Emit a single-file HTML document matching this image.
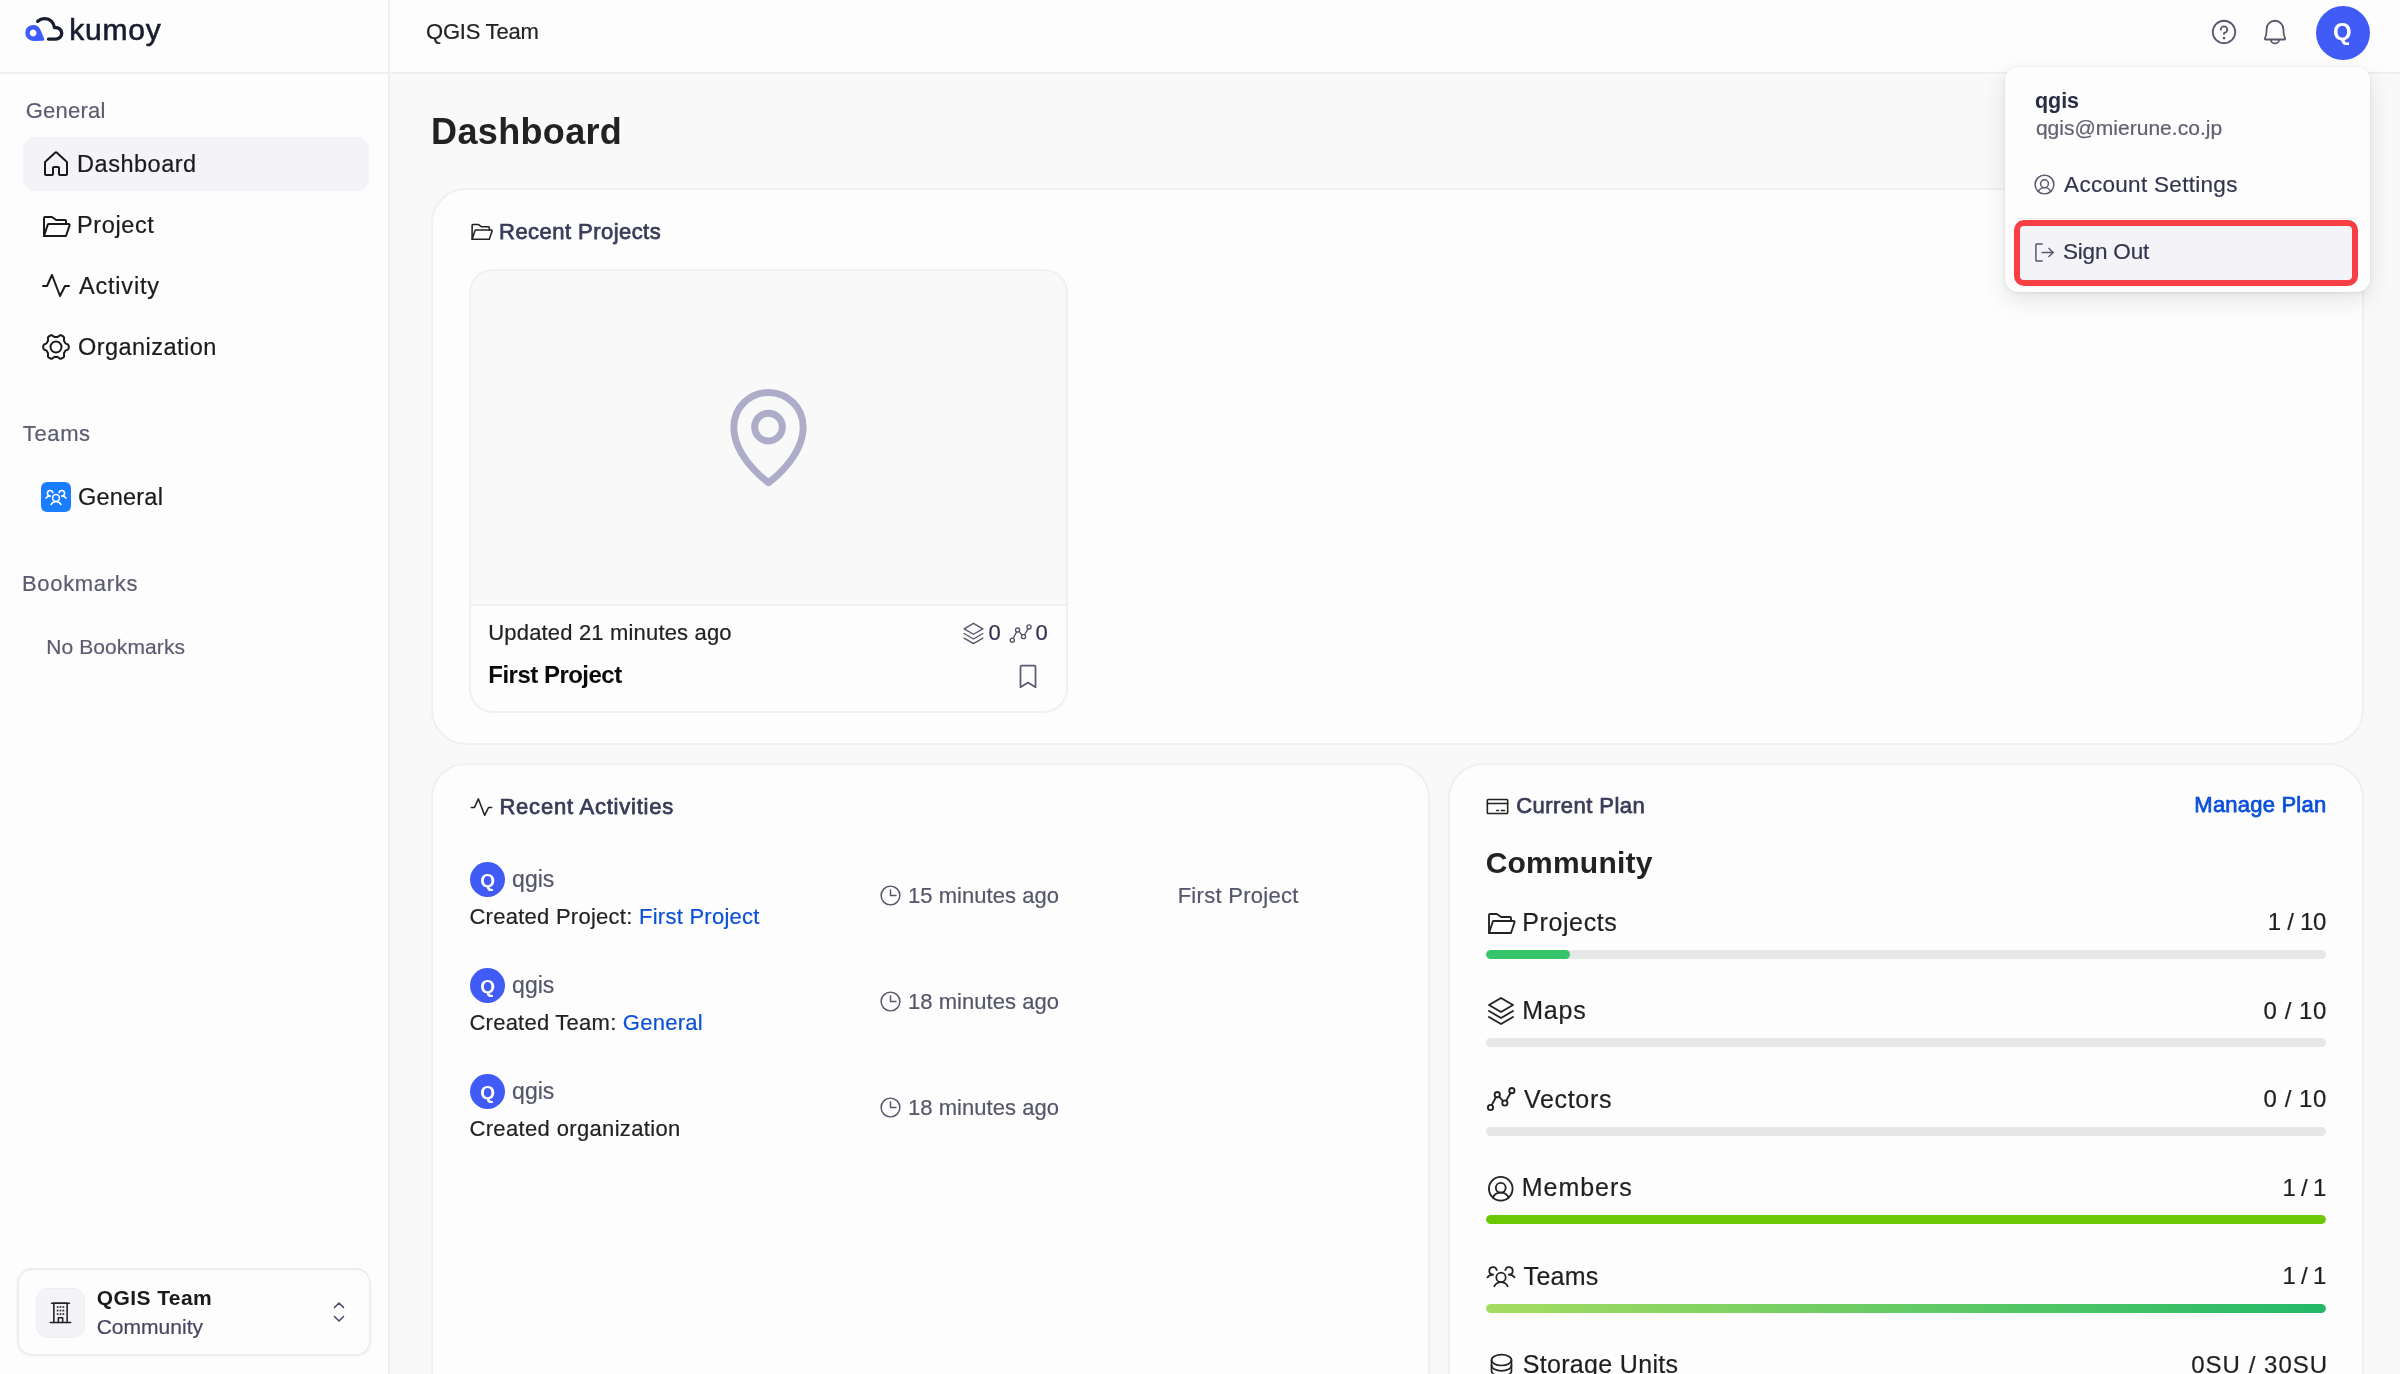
<!DOCTYPE html>
<html lang="en">
<head>
<meta charset="utf-8">
<title>Dashboard - kumoy</title>
<style>
*{box-sizing:border-box;margin:0;padding:0}
html,body{width:2400px;height:1374px;overflow:hidden}
body{position:relative;background:#f9f9f9;will-change:transform;font-family:"Liberation Sans",sans-serif;color:#1c1c1c}
.abs,.t,svg.i{position:absolute}
.t{white-space:nowrap;line-height:1;left:0;top:0;font-weight:normal;-webkit-text-stroke:.2px currentColor}
.t.b{-webkit-text-stroke:0}
svg.i{fill:none;stroke:currentColor;stroke-linecap:round;stroke-linejoin:round;overflow:visible}
a{color:#0b50d8;text-decoration:none}
b,.b{font-weight:bold}
/* sidebar */
#sidebar{position:absolute;left:0;top:0;width:390px;height:1374px;background:#fdfdfd;border-right:2px solid #efeff0}
#logo{position:absolute;left:0;top:0;width:388px;height:74px;border-bottom:2px solid #efeff0}
.lbl{color:#5b5c70;font-size:21px}
.nav{font-size:23px;color:#1a1a1a}
#active{position:absolute;left:23px;top:137px;width:346px;height:54px;border-radius:13px;background:#f3f3f8}
#teamic{position:absolute;left:41px;top:482px;width:30px;height:30px;border-radius:6px;background:#1a7dff;color:#fff}
#orgcard{position:absolute;left:16.5px;top:1268px;width:354px;height:88px;border:2px solid #eeeef1;border-radius:15px;background:#fdfdfd;box-shadow:0 1px 3px rgba(0,0,0,.04)}
#orgic{position:absolute;left:17px;top:18px;width:49.5px;height:49.5px;border-radius:12px;background:#f3f3f8;border:1px solid #ededf2;color:#222}
/* header */
#header{position:absolute;left:390px;top:0;width:2010px;height:74px;background:#fdfdfd;border-bottom:2px solid #efeff0}
#avatar{position:absolute;left:1925.7px;top:5.6px;width:54px;height:54px;border-radius:50%;background:#405bf6;color:#fff}
/* main */
.card{position:absolute;background:#fdfdfd;border:2px solid #f0f0f1;border-radius:35px}
.ctitle{color:#3a3c58}
#pcard{position:absolute;left:469px;top:268.5px;width:598.5px;height:444.5px;border:2px solid #f0f0f1;border-radius:24px;background:#fdfdfd;overflow:hidden}
#pimg{position:absolute;left:0;top:0;width:595px;height:335.5px;background:#f9f9f9;border-bottom:2px solid #f0f0f1}
.av{position:absolute;width:35px;height:35px;border-radius:50%;background:#405bf6;color:#fff}
.mut{color:#55566a}
.bar{position:absolute;left:1486px;width:840px;height:9px;border-radius:5px;background:#e7e7e7;overflow:hidden}
.bar i{position:absolute;left:0;top:0;height:9px;border-radius:5px;display:block}
.row{font-size:25px;color:#1f1f1f}
/* menu */
#menu{position:absolute;left:2005px;top:67px;width:365px;height:225px;border-radius:13px;background:#fdfdfd;box-shadow:0 0 0 1px rgba(0,0,0,.03),0 8px 24px rgba(0,0,0,.10),0 2px 6px rgba(0,0,0,.05)}
#signout{position:absolute;left:9px;top:153px;width:344px;height:66px;border:6px solid #f83f43;border-radius:10px;background:#f3f3f8}
#mdiv{position:absolute;left:12px;top:151px;width:340px;height:1px;background:#e9e9ee}
</style>
</head>
<body>

<div id="sidebar">
  <div id="logo">
    <svg class="abs" style="left:20px;top:12px" width="50" height="34" viewBox="20 12 50 34">
      <path fill="#3d5cff" fill-rule="evenodd" d="M25.300 33A7.900 7.900 0 0 1 40.300 29.500L44.100 38.600Q44.900 40.700 42.700 40.800L33.200 40.900A7.900 7.900 0 0 1 25.300 33ZM33.100 29.600a3.400 3.400 0 1 0 .01 0Z"/>
      <path fill="none" stroke="#171c2e" stroke-width="3.4" stroke-linecap="round" stroke-linejoin="round" d="M37.700 21.300C40 19.200 42.500 18.500 44.800 18.600C50.200 18.800 53.600 22.500 54.400 27.500C58.500 27.200 61.700 29.600 61.700 33.300C61.700 36.600 59 39.100 55.500 39.100L48.500 39.100"/>
    </svg>
    <span class="t" id="brand" style="left:69.36px;top:15.31px;font-size:30px;color:#171c2e;letter-spacing:0.765px;-webkit-text-stroke:.6px #171c2e;">kumoy</span>
  </div>
  <span class="t lbl" id="l-general" style="left:25.64px;top:99.5px;font-size:22px;letter-spacing:0.27px;">General</span>
  <div id="active"></div>
  <svg class="i" viewBox="0 0 256 256" stroke-width="16" style="left:40px;top:148px;width:32px;height:32px;color:#1a1a1a;"><path d="M152 208V160a8 8 0 0 0-8-8H112a8 8 0 0 0-8 8v48a8 8 0 0 1-8 8H48a8 8 0 0 1-8-8V115.5a8.3 8.3 0 0 1 2.6-5.9l80-72.7a8 8 0 0 1 10.8 0l80 72.7a8.3 8.3 0 0 1 2.6 5.9V208a8 8 0 0 1-8 8H160a8 8 0 0 1-8-8Z"/></svg>
  <span class="t nav" id="n-dash" style="left:77.1px;top:153.3px;font-size:23.5px;letter-spacing:0.517px;">Dashboard</span>
  <svg class="i" viewBox="0 0 256 256" stroke-width="16" style="left:40px;top:210px;width:32px;height:32px;color:#1a1a1a;"><path d="M32 208V64a8 8 0 0 1 8-8H93.3a8.1 8.1 0 0 1 4.8 1.6l27.8 20.8a8.1 8.1 0 0 0 4.8 1.6H200a8 8 0 0 1 8 8v24"/><path d="M32 208l30.2-90.5a8 8 0 0 1 7.6-5.5H228.9a8 8 0 0 1 7.6 10.500L208 208Z"/></svg>
  <span class="t nav" id="n-proj" style="left:77.1px;top:214.0px;font-size:23.5px;letter-spacing:0.6px;">Project</span>
  <svg class="i" viewBox="0 0 256 256" stroke-width="16" style="left:40px;top:270px;width:32px;height:32px;color:#1a1a1a;"><polyline points="24,128 56,128 96,40 160,208 200,128 232,128"/></svg>
  <span class="t nav" id="n-act" style="left:78.9px;top:275.0px;font-size:23.5px;letter-spacing:0.825px;">Activity</span>
  <svg class="i" viewBox="0 0 256 256" stroke-width="16" style="left:40px;top:331px;width:32px;height:32px;color:#1a1a1a;"><circle cx="128" cy="128" r="44"/><path d="M230 128L230 135L228 141L225 147L216 152L207 155L203 159L200 163L197 168L195 173L192 177L191 183L192 192L193 202L190 208L185 213L179 216L173 219L167 222L160 222L152 216L144 210L139 208L133 208L128 208L123 208L117 208L112 210L104 216L96 222L89 222L83 219L77 216L71 213L66 208L63 202L64 192L65 183L64 177L61 173L59 168L56 163L53 159L49 155L40 152L31 147L28 141L26 135L26 128L26 121L28 115L31 109L40 104L49 101L53 97L56 93L59 88L61 83L64 79L65 73L64 64L63 54L66 48L71 43L77 40L83 37L89 34L96 34L104 40L112 46L117 48L123 48L128 48L133 48L139 48L144 46L152 40L160 34L167 34L173 37L179 40L185 43L190 48L193 54L192 64L191 73L192 79L195 83L197 88L200 93L203 97L207 101L216 104L225 109L228 115L230 121Z"/></svg>
  <span class="t nav" id="n-org" style="left:78.0px;top:336.3px;font-size:23.5px;letter-spacing:0.455px;">Organization</span>
  <span class="t lbl" id="l-teams" style="left:22.82px;top:423.21px;font-size:22px;letter-spacing:0.622px;">Teams</span>
  <div id="teamic"><svg class="i" viewBox="0 0 256 256" stroke-width="18" style="left:4px;top:4px;width:22px;height:22px;color:#fff;"><circle cx="128" cy="140" r="40"/><path d="M196 116a59.8 59.8 0 0 1 48 24"/><path d="M12 140a59.8 59.8 0 0 1 48-24"/><path d="M70.4 216a64.100 64.100 0 0 1 115.2 0"/><path d="M60 116A32 32 0 1 1 91.4 78"/><path d="M164.6 78A32 32 0 1 1 196 116"/></svg></div>
  <span class="t nav" id="n-gen" style="left:78.0px;top:485.6px;font-size:23.5px;letter-spacing:0.21px;">General</span>
  <span class="t lbl" id="l-book" style="left:21.92px;top:573.21px;font-size:22px;letter-spacing:0.696px;">Bookmarks</span>
  <span class="t" id="nobook" style="left:46.28px;top:636.3px;font-size:21px;color:#5b5c70;letter-spacing:0.094px;">No Bookmarks</span>
  <div id="orgcard">
    <div id="orgic"><svg class="i" viewBox="0 0 256 256" stroke-width="16" style="left:11.2px;top:11px;width:25px;height:25px;color:#222;"><line x1="24" y1="231" x2="232" y2="231"/><path d="M60 231V34h136v197"/><line x1="37" y1="34" x2="219" y2="34"/><path d="M106 231v-50h44v50"/><g stroke-width="17" stroke-linecap="butt"><line x1="90" y1="72" x2="107" y2="72"/><line x1="119.500" y1="72" x2="136.500" y2="72"/><line x1="149" y1="72" x2="166" y2="72"/><line x1="90" y1="108" x2="107" y2="108"/><line x1="119.500" y1="108" x2="136.500" y2="108"/><line x1="149" y1="108" x2="166" y2="108"/><line x1="90" y1="144" x2="107" y2="144"/><line x1="119.500" y1="144" x2="136.500" y2="144"/><line x1="149" y1="144" x2="166" y2="144"/></g></svg></div>
    <span class="t b" id="o-name" style="left:78.2px;top:17.0px;font-size:21px;color:#1a1a1a;letter-spacing:0.428px;">QGIS Team</span>
    <span class="t" id="o-plan" style="left:78.2px;top:46.21px;font-size:21px;color:#45465f;letter-spacing:0.018px;">Community</span>
    <svg class="i" viewBox="0 0 256 256" stroke-width="16" style="left:308.35px;top:30.25px;width:24px;height:24px;color:#45465f;"><polyline points="80 176 128 224 176 176"/><polyline points="80 80 128 32 176 80"/></svg>
  </div>
</div>

<div id="header">
  <span class="t" id="h-team" style="left:36.0px;top:21.31px;font-size:22px;color:#222;letter-spacing:-0.225px;">QGIS Team</span>
  <svg class="i" viewBox="0 0 256 256" stroke-width="15" style="left:1818.6999999999998px;top:17.3px;width:30px;height:30px;color:#55566a;"><circle cx="128" cy="128" r="96"/><circle cx="128" cy="180" r="11" fill="currentColor" stroke="none"/><path d="M128 144v-8a28 28 0 1 0-28-28"/></svg>
  <svg class="i" viewBox="0 0 256 256" stroke-width="15" style="left:1870.3000000000002px;top:17px;width:30px;height:30px;color:#55566a;"><path d="M56.2 104a71.900 71.900 0 0 1 72.300-72c39.6.3 71.3 33.2 71.3 72.900V112c0 35.8 7.5 56.6 14.100 68a8 8 0 0 1-6.900 12H49a8 8 0 0 1-6.900-12c6.600-11.400 14.100-32.200 14.100-68Z"/><path d="M94 196a34 30 0 0 0 68 0"/></svg>
  <div id="avatar"><span class="t b" id="av-q" style="left:17.3px;top:14.71px;font-size:24px;color:#fff;letter-spacing:0px;">Q</span></div>
</div>

<div id="main">
  <h1 class="t b" id="h1" style="left:431.1px;top:113.51px;font-size:36px;color:#222;letter-spacing:0.337px;">Dashboard</h1>
  <div class="card" id="c1" style="left:431.2px;top:188px;width:1933px;height:557.3px"></div>
  <svg class="i" viewBox="0 0 256 256" stroke-width="16" style="left:468.7px;top:219.3px;width:25px;height:25px;color:#222;"><path d="M32 208V64a8 8 0 0 1 8-8H93.3a8.1 8.1 0 0 1 4.8 1.6l27.8 20.8a8.1 8.1 0 0 0 4.8 1.6H200a8 8 0 0 1 8 8v24"/><path d="M32 208l30.2-90.5a8 8 0 0 1 7.6-5.5H228.9a8 8 0 0 1 7.6 10.500L208 208Z"/></svg>
  <span class="t ctitle" id="c1-t" style="left:499.1px;top:221.31px;font-size:22px;letter-spacing:0.45px;-webkit-text-stroke:.75px currentColor;">Recent Projects</span>
  <div id="pcard">
    <div id="pimg"><svg class="i" viewBox="0 0 256 256" stroke-width="16" style="left:242px;top:111.3px;width:111px;height:111px;color:#aeadc9;"><circle cx="128" cy="104" r="32"/><path d="M208 104c0 72-80 128-80 128S48 176 48 104a80 80 0 0 1 160 0Z"/></svg></div>
    <span class="t" id="p-upd" style="left:17.28px;top:351.5px;font-size:22px;color:#222;letter-spacing:0.171px;">Updated 21 minutes ago</span>
    <svg class="i" viewBox="0 0 256 256" stroke-width="14" style="left:489.6px;top:350.20000000000005px;width:25px;height:25px;color:#55566a;"><polyline points="32 176 128 232 224 176"/><polyline points="32 128 128 184 224 128"/><polygon points="32 80 128 136 224 80 128 24 32 80"/></svg>
    <span class="t" id="p-n1" style="left:517.5px;top:351.81px;font-size:22px;color:#2f3150;letter-spacing:0px;">0</span>
    <svg class="i" viewBox="0 0 256 256" stroke-width="14" style="left:537px;top:350.0px;width:25px;height:25px;color:#55566a;"><circle cx="44" cy="196" r="21"/><circle cx="98" cy="93" r="21"/><circle cx="159" cy="160" r="21"/><circle cx="215" cy="61" r="21"/><line x1="54" y1="177" x2="88" y2="112"/><line x1="113" y1="109" x2="144" y2="144"/><line x1="169" y1="141" x2="205" y2="80"/></svg>
    <span class="t" id="p-n2" style="left:564.5px;top:351.81px;font-size:22px;color:#2f3150;letter-spacing:0px;">0</span>
    <span class="t b" id="p-name" style="left:17.28px;top:392.71px;font-size:24px;color:#0a0a0a;letter-spacing:-0.51px;">First Project</span>
    <svg class="i" viewBox="0 0 256 256" stroke-width="15" style="left:541.7px;top:390.25px;width:30px;height:30px;color:#5a5b70;"><path d="M192 224l-64-40L64 224V48a8 8 0 0 1 8-8H184a8 8 0 0 1 8 8Z"/></svg>
  </div>

  <div class="card" id="c2" style="left:431.2px;top:763px;width:998.5px;height:700px"></div>
  <svg class="i" viewBox="0 0 256 256" stroke-width="16" style="left:468.8px;top:794.9px;width:25px;height:25px;color:#222;"><polyline points="24,128 56,128 96,40 160,208 200,128 232,128"/></svg>
  <span class="t ctitle" id="c2-t" style="left:499.46px;top:795.5px;font-size:22px;letter-spacing:0.771px;-webkit-text-stroke:.75px currentColor;">Recent Activities</span>
  <div class="av" style="left:470px;top:862.4px"><span class="t b" id="a1-q" style="left:10.2px;top:8.32px;font-size:19px;color:#fff;letter-spacing:0px;">Q</span></div><span class="t mut" id="a1-who" style="left:512.1px;top:867.71px;font-size:23px;letter-spacing:0.0px;">qgis</span><span class="t" id="a1-what" style="left:469.46px;top:906.4px;font-size:22px;color:#222;letter-spacing:0.262px;">Created Project: <a>First Project</a></span><svg class="i" viewBox="0 0 256 256" stroke-width="15" style="left:877.5px;top:883.3px;width:25px;height:25px;color:#55566a;"><circle cx="128" cy="128" r="96"/><polyline points="128 72 128 128 184 128"/></svg><span class="t mut" id="a1-when" style="left:908.0px;top:885.0px;font-size:22px;letter-spacing:0.042px;">15 minutes ago</span><span class="t mut" id="a1-third" style="left:1177.64px;top:885.0px;font-size:22px;letter-spacing:0.285px;">First Project</span>
  <div class="av" style="left:470px;top:968.4px"><span class="t b" id="a2-q" style="left:10.2px;top:8.32px;font-size:19px;color:#fff;letter-spacing:0px;">Q</span></div><span class="t mut" id="a2-who" style="left:512.1px;top:973.71px;font-size:23px;letter-spacing:0.0px;">qgis</span><span class="t" id="a2-what" style="left:469.46px;top:1012.4px;font-size:22px;color:#222;letter-spacing:0.242px;">Created Team: <a>General</a></span><svg class="i" viewBox="0 0 256 256" stroke-width="15" style="left:877.5px;top:989.3px;width:25px;height:25px;color:#55566a;"><circle cx="128" cy="128" r="96"/><polyline points="128 72 128 128 184 128"/></svg><span class="t mut" id="a2-when" style="left:908.0px;top:991.0px;font-size:22px;letter-spacing:0.042px;">18 minutes ago</span>
  <div class="av" style="left:470px;top:1074.4px"><span class="t b" id="a3-q" style="left:10.2px;top:8.32px;font-size:19px;color:#fff;letter-spacing:0px;">Q</span></div><span class="t mut" id="a3-who" style="left:512.1px;top:1079.71px;font-size:23px;letter-spacing:0.0px;">qgis</span><span class="t" id="a3-what" style="left:469.46px;top:1118.4px;font-size:22px;color:#222;letter-spacing:0.349px;">Created organization</span><svg class="i" viewBox="0 0 256 256" stroke-width="15" style="left:877.5px;top:1095.3000000000002px;width:25px;height:25px;color:#55566a;"><circle cx="128" cy="128" r="96"/><polyline points="128 72 128 128 184 128"/></svg><span class="t mut" id="a3-when" style="left:908.0px;top:1097.0px;font-size:22px;letter-spacing:0.042px;">18 minutes ago</span>

  <div class="card" id="c3" style="left:1448px;top:763px;width:916.2px;height:700px"></div>
  <svg class="i" viewBox="0 0 256 256" stroke-width="16" style="left:1485.4px;top:794.3px;width:25px;height:25px;color:#222;"><rect x="24" y="56" width="208" height="144" rx="8"/><line x1="168" y1="168" x2="200" y2="168"/><line x1="120" y1="168" x2="136" y2="168"/><line x1="24" y1="97" x2="232" y2="97"/></svg>
  <span class="t ctitle" id="c3-t" style="left:1516.18px;top:795.31px;font-size:22px;letter-spacing:0.455px;-webkit-text-stroke:.75px currentColor;">Current Plan</span>
  <a class="t" id="c3-m" style="left:auto;right:73.64px;top:794px;font-size:22px;letter-spacing:0.216px;-webkit-text-stroke:.75px currentColor;">Manage Plan</a>
  <span class="t b" id="c3-plan" style="left:1485.64px;top:848.0px;font-size:30px;color:#222;letter-spacing:0.225px;">Community</span>
  <svg class="i" viewBox="0 0 256 256" stroke-width="15" style="left:1485.0px;top:907.0px;width:32px;height:32px;color:#222;"><path d="M32 208V64a8 8 0 0 1 8-8H93.3a8.1 8.1 0 0 1 4.8 1.6l27.8 20.8a8.1 8.1 0 0 0 4.8 1.6H200a8 8 0 0 1 8 8v24"/><path d="M32 208l30.2-90.5a8 8 0 0 1 7.6-5.5H228.9a8 8 0 0 1 7.6 10.500L208 208Z"/></svg><span class="t row" id="p1-l" style="left:1522.18px;top:909.51px;font-size:25px;letter-spacing:0.622px;">Projects</span><span class="t row" id="p1-v" style="left:auto;right:74.04px;top:910px;font-size:24px;letter-spacing:-0.306px">1 / 10</span><div class="bar" style="top:950px"><i style="width:84px;background:#35c46a"></i></div>
  <svg class="i" viewBox="0 0 256 256" stroke-width="15" style="left:1485.0px;top:994.8px;width:32px;height:32px;color:#222;"><polyline points="32 176 128 232 224 176"/><polyline points="32 128 128 184 224 128"/><polygon points="32 80 128 136 224 80 128 24 32 80"/></svg><span class="t row" id="p2-l" style="left:1522.18px;top:998.31px;font-size:25px;letter-spacing:0.84px;">Maps</span><span class="t row" id="p2-v" style="left:auto;right:73.14px;top:999px;font-size:24px;letter-spacing:0.54px">0 / 10</span><div class="bar" style="top:1038px"></div>
  <svg class="i" viewBox="0 0 256 256" stroke-width="15" style="left:1485.0px;top:1083.2px;width:32px;height:32px;color:#222;"><circle cx="44" cy="196" r="21"/><circle cx="98" cy="93" r="21"/><circle cx="159" cy="160" r="21"/><circle cx="215" cy="61" r="21"/><line x1="54" y1="177" x2="88" y2="112"/><line x1="113" y1="109" x2="144" y2="144"/><line x1="169" y1="141" x2="205" y2="80"/></svg><span class="t row" id="p3-l" style="left:1523.98px;top:1086.71px;font-size:25px;letter-spacing:0.69px;">Vectors</span><span class="t row" id="p3-v" style="left:auto;right:73.14px;top:1087px;font-size:24px;letter-spacing:0.54px">0 / 10</span><div class="bar" style="top:1127px"></div>
  <svg class="i" viewBox="0 0 256 256" stroke-width="15" style="left:1485.25px;top:1172.75px;width:31.5px;height:31.5px;color:#222;"><circle cx="128" cy="128" r="96"/><circle cx="128" cy="120" r="40"/><path d="M63.8 199.4a72 72 0 0 1 128.4 0"/></svg><span class="t row" id="p4-l" style="left:1521.82px;top:1175.01px;font-size:25px;letter-spacing:0.96px;">Members</span><span class="t row" id="p4-v" style="left:auto;right:74.49px;top:1176px;font-size:24px;letter-spacing:-0.72px">1 / 1</span><div class="bar" style="top:1215px"><i style="width:840px;background:#6cc704"></i></div>
  <svg class="i" viewBox="0 0 256 256" stroke-width="15" style="left:1486.0px;top:1260.8px;width:30px;height:30px;color:#222;"><circle cx="128" cy="140" r="40"/><path d="M196 116a59.8 59.8 0 0 1 48 24"/><path d="M12 140a59.8 59.8 0 0 1 48-24"/><path d="M70.4 216a64.100 64.100 0 0 1 115.2 0"/><path d="M60 116A32 32 0 1 1 91.4 78"/><path d="M164.6 78A32 32 0 1 1 196 116"/></svg><span class="t row" id="p5-l" style="left:1523.62px;top:1263.81px;font-size:25px;letter-spacing:0.278px;">Teams</span><span class="t row" id="p5-v" style="left:auto;right:74.49px;top:1264px;font-size:24px;letter-spacing:-0.72px">1 / 1</span><div class="bar" style="top:1304px"><i style="width:840px;background:linear-gradient(90deg,#a5dc60,#23b968)"></i></div>
  <svg class="i" viewBox="0 0 256 256" stroke-width="15" style="left:1486.5px;top:1350.8px;width:29px;height:29px;color:#222;"><ellipse cx="128" cy="80" rx="88" ry="48"/><path d="M40 80v48c0 26.500 39.400 48 88 48s88-21.500 88-48V80"/><path d="M40 128v48c0 26.500 39.400 48 88 48s88-21.500 88-48V128"/></svg><span class="t row" id="p6-l" style="left:1522.72px;top:1352.31px;font-size:25px;letter-spacing:0.323px;">Storage Units</span><span class="t row" id="p6-v" style="left:auto;right:71.79px;top:1353px;font-size:24px;letter-spacing:1.03px">0SU / 30SU</span><div class="bar" style="top:1392px"></div>
</div>

<div id="menu">
  <span class="t b" id="m-name" style="left:30.0px;top:24.31px;font-size:21.5px;color:#2a2b45;letter-spacing:-0.06px;">qgis</span>
  <span class="t" id="m-mail" style="left:30.9px;top:50.1px;font-size:21px;color:#60616f;letter-spacing:0.018px;">qgis@mierune.co.jp</span>
  <svg class="i" viewBox="0 0 256 256" stroke-width="15" style="left:26.700000000000045px;top:105.1px;width:25px;height:25px;color:#55566a;"><circle cx="128" cy="128" r="96"/><circle cx="128" cy="120" r="40"/><path d="M63.8 199.4a72 72 0 0 1 128.4 0"/></svg>
  <span class="t" id="m-acc" style="left:59.08px;top:106.51px;font-size:22.5px;color:#33354e;letter-spacing:0.3px;">Account Settings</span>
  <div id="mdiv"></div>
  <div id="signout">
    <svg class="i" viewBox="0 0 256 256" stroke-width="15" style="left:12px;top:13.599999999999994px;width:25px;height:25px;color:#55566a;"><polyline points="174 86 216 128 174 170"/><line x1="104" y1="128" x2="216" y2="128"/><path d="M104 216H48a8 8 0 0 1-8-8V48a8 8 0 0 1 8-8h56"/></svg>
    <span class="t" id="m-out" style="left:42.98px;top:15.01px;font-size:22.5px;color:#33354e;letter-spacing:-0.18px;">Sign Out</span>
  </div>
</div>

</body>
</html>
